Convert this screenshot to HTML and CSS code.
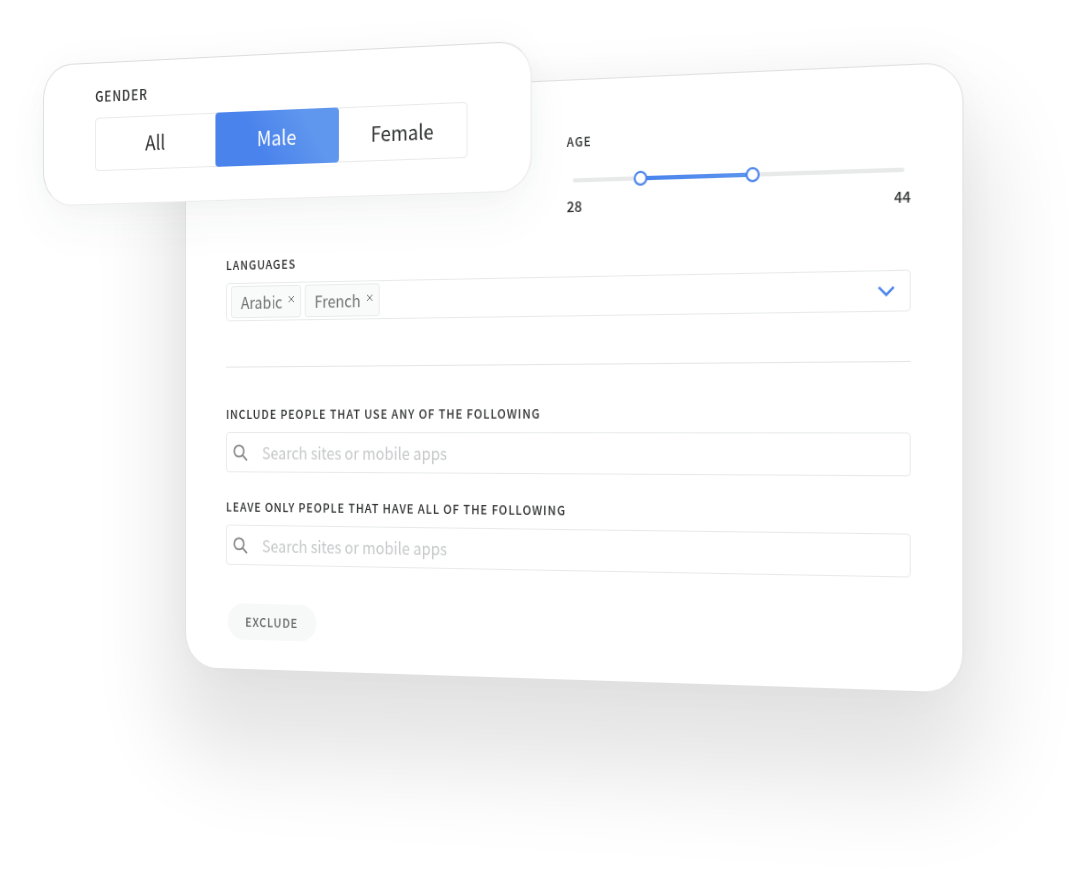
FILE: index.html
```html
<!DOCTYPE html>
<html lang="en">
<head>
<meta charset="utf-8">
<meta name="viewport" content="width=device-width, initial-scale=1">
<title>Audience filters</title>
<link rel="stylesheet" href="styles.css">
</head>
<body>
<main class="scene">
  <form class="panel">
    <section class="age" role="group" aria-labelledby="age-label">
      <h2 class="label" id="age-label">Age</h2>
      <div class="range">
        <div class="range-fill" style="--from: 0.2; --to: 0.556"></div>
        <input class="range-input" type="range" min="19" max="64" value="28" aria-label="Minimum age">
        <input class="range-input" type="range" min="19" max="64" value="44" aria-label="Maximum age">
      </div>
      <div class="range-values"><span>28</span><span>44</span></div>
    </section>

    <section class="field languages" role="group" aria-labelledby="lang-label">
      <h2 class="label" id="lang-label">Languages</h2>
      <div class="multi">
        <span class="tag">Arabic<button class="tag-remove" type="button" aria-label="Remove Arabic"><svg viewBox="0 0 8 8"><path d="M1 1l6 6M7 1l-6 6"/></svg></button></span>
        <span class="tag">French<button class="tag-remove" type="button" aria-label="Remove French"><svg viewBox="0 0 8 8"><path d="M1 1l6 6M7 1l-6 6"/></svg></button></span>
        <button class="multi-toggle" type="button" aria-label="Choose languages"><svg viewBox="0 0 16 10"><path d="M1.2 1.4L8 8l6.800-6.600"/></svg></button>
      </div>
    </section>

    <hr class="divider">

    <div class="field">
      <label class="label" for="include">Include people that use any of the following</label>
      <div class="search">
        <svg class="search-icon" viewBox="0 0 16 16"><circle cx="6.500" cy="6.500" r="5.200"/><path d="M10.200 10.200L15 15.200"/></svg>
        <input class="search-input" id="include" type="text" placeholder="Search sites or mobile apps">
      </div>
    </div>

    <div class="field leave">
      <label class="label" for="leave">Leave only people that have all of the following</label>
      <div class="search">
        <svg class="search-icon" viewBox="0 0 16 16"><circle cx="6.500" cy="6.500" r="5.200"/><path d="M10.200 10.200L15 15.200"/></svg>
        <input class="search-input" id="leave" type="text" placeholder="Search sites or mobile apps">
      </div>
    </div>

    <button class="exclude" type="button">Exclude</button>

    <section class="gender" role="group" aria-labelledby="gender-label">
      <h2 class="label gender-label" id="gender-label">Gender</h2>
      <div class="segments">
        <button class="segment" type="button" aria-pressed="false">All</button>
        <button class="segment segment-active" type="button" aria-pressed="true">Male</button>
        <button class="segment" type="button" aria-pressed="false">Female</button>
      </div>
    </section>
  </form>
</main>
</body>
</html>
```
FILE: styles.css
```css
* {
  box-sizing: border-box;
}

body {
  margin: 0;
  min-height: 100vh;
  background: #fff;
  color: #2f3031;
  font-family: "Noto Sans CJK SC", "Noto Sans", sans-serif;
  overflow-x: hidden;
}

button,
input {
  font: inherit;
  color: inherit;
}

button {
  padding: 0;
  border: 0;
  background: none;
  cursor: pointer;
}

svg {
  display: block;
  fill: none;
  stroke: currentColor;
}

/* The panel is a plane turned towards the viewer on its right side. */
.scene {
  padding: 97px 83px 200px 185px;
  perspective: 4198px;
  perspective-origin: 185px 428px;
  overflow: hidden;
}

.panel {
  position: relative;
  display: flex;
  flex-direction: column;
  padding: 48px 49px 29px 46px;
  border: 1px solid #e0e0e0;
  border-radius: 36px;
  background: #fff;
  box-shadow: 0 64px 90px 20px rgba(0, 0, 0, 0.11), 0 0 56px rgba(0, 0, 0, 0.04);
  transform: rotateY(-30deg);
  transform-origin: left center;
}

.label {
  margin: 0;
  font-size: 12px;
  line-height: 20px;
  font-weight: 500;
  letter-spacing: 1px;
  text-transform: uppercase;
}

.age {
  align-self: flex-end;
  width: 48%;
}

.range {
  position: relative;
  height: 14px;
  margin: 20px 6px 7px;
}

.range::before {
  content: "";
  position: absolute;
  inset: 5px 0;
  border-radius: 2px;
  background: #e8e9e9;
}

.range-fill {
  position: absolute;
  top: 5px;
  bottom: 5px;
  left: calc(7px + (100% - 14px) * var(--from));
  right: calc(7px + (100% - 14px) * (1 - var(--to)));
  background: linear-gradient(90deg, #4a83ec, #5c94ee);
}

.range-input {
  position: absolute;
  inset: 0;
  width: 100%;
  height: 14px;
  margin: 0;
  appearance: none;
  background: none;
  pointer-events: none;
}

.range-input::-webkit-slider-thumb {
  appearance: none;
  width: 14px;
  height: 14px;
  border: 2px solid #4a83ec;
  border-radius: 50%;
  background: #fff;
  pointer-events: auto;
}

.range-values {
  display: flex;
  justify-content: space-between;
  font-size: 14px;
  line-height: 20px;
  font-weight: 500;
}

.languages {
  margin-top: 29px;
}

.multi {
  display: flex;
  align-items: center;
  gap: 4px;
  height: 38px;
  margin-top: 8px;
  padding: 0 14px 0 5px;
  border: 1px solid #e8eaea;
  border-radius: 4px;
}

.tag {
  display: flex;
  align-items: center;
  gap: 6px;
  height: 32px;
  padding: 0 6px 0 10px;
  border: 1px solid #e8ebeb;
  border-radius: 3px;
  background: #f9fafa;
  color: #6f7172;
  font-size: 16px;
  line-height: 24px;
}

.tag-remove {
  width: 8px;
  height: 8px;
  margin-bottom: 4px;
}

.multi-toggle {
  width: 17px;
  margin-left: auto;
  color: #4a83ec;
  stroke-width: 2.2;
}

.divider {
  width: 100%;
  height: 1px;
  margin: 45px 0 36px;
  border: 0;
  background: #e4e5e5;
}

.field .label {
  display: block;
}

.search {
  display: flex;
  align-items: center;
  gap: 16px;
  height: 40px;
  margin-top: 8px;
  padding: 0 7px;
  border: 1px solid #e8eaea;
  border-radius: 4px;
}

.search-icon {
  flex: none;
  width: 17px;
  height: 17px;
  color: #858788;
  stroke-width: 1.7;
}

.search-input {
  flex: 1;
  min-width: 0;
  padding: 0;
  border: 0;
  outline: 0;
  background: none;
  font-size: 16px;
  line-height: 24px;
}

.search-input::placeholder {
  color: #c6c8c9;
  opacity: 1;
}

.leave {
  margin-top: 24px;
}

.exclude {
  align-self: flex-start;
  height: 36px;
  margin: 38px 0 0 2px;
  padding: 0 20px;
  border-radius: 18px;
  background: #f7f9f9;
  color: #626465;
  font-size: 12px;
  line-height: 20px;
  font-weight: 500;
  letter-spacing: 1px;
  text-transform: uppercase;
}

/* Raised card that overlaps the panel's corner. */
.gender {
  position: absolute;
  top: -40px;
  left: -168px;
  width: 549px;
  padding: 23px 67px 33px 61px;
  border: 1px solid;
  border-color: #dcdcdc #e8e8e8 #ececec #dcdcdc;
  border-radius: 34px;
  background: #fff;
  box-shadow: 0 20px 48px rgba(40, 70, 60, 0.05), 0 0 40px rgba(0, 0, 0, 0.03);
}

.gender-label {
  font-size: 14px;
}

.segments {
  display: grid;
  grid-template-columns: repeat(3, 1fr);
  height: 54px;
  margin-top: 12px;
  border: 1px solid #e8eaea;
  border-radius: 4px;
}

.segment {
  margin: -1px 0;
  font-size: 20px;
  line-height: 28px;
}

.segment-active {
  border-radius: 4px;
  background: linear-gradient(60deg, #4a83ec 35%, #5f96ee 75%);
  color: #fff;
}
```
